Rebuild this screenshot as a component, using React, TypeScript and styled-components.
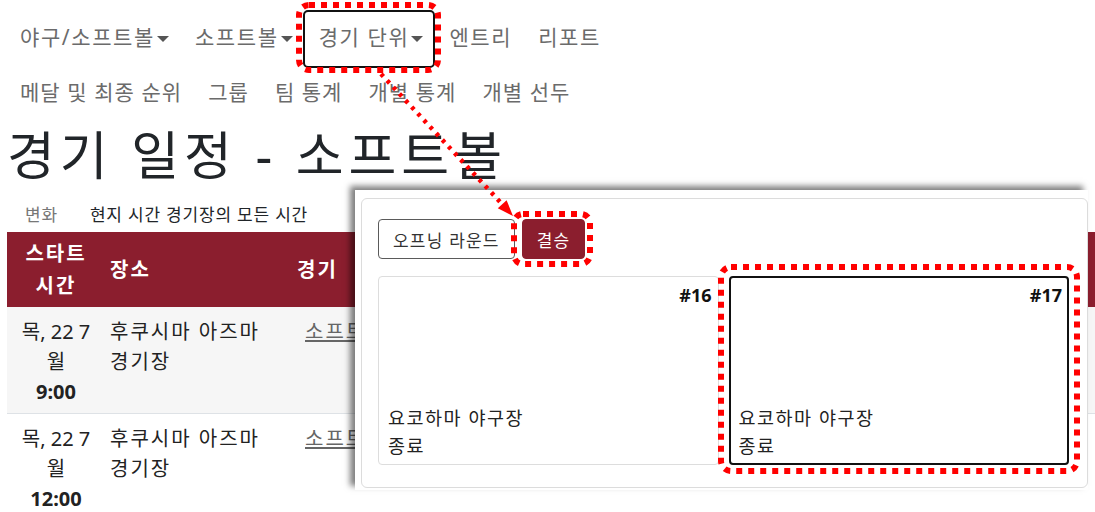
import React from "react";
import styled, { createGlobalStyle } from "styled-components";

const MAROON = "#8b1e2e";

const GlobalStyle = createGlobalStyle`
  html, body {
    margin: 0;
    padding: 0;
    background: #fff;
  }
  body {
    font-family: "Noto Sans", "Noto Sans CJK KR", sans-serif;
    color: #212529;
    overflow: hidden;
  }
`;

const navTop = ["야구/소프트볼", "소프트볼", "경기 단위", "엔트리", "리포트"];
const dropdowns = ["야구/소프트볼", "소프트볼", "경기 단위"];
const navBottom = ["메달 및 최종 순위", "그룹", "팀 통계", "개별 통계", "개별 선두"];

const games = [
  { day: "목, 22 7", month: "월", time: "9:00", venue: ["후쿠시마 아즈마", "경기장"], striped: true },
  { day: "목, 22 7", month: "월", time: "12:00", venue: ["후쿠시마 아즈마", "경기장"], striped: false }
];

const cards = [
  { num: "#16", venue: "요코하마 야구장", status: "종료", selected: false },
  { num: "#17", venue: "요코하마 야구장", status: "종료", selected: true }
];

export default function App() {
  return (
    <>
      <GlobalStyle />
      <Page>
        <NavRow>
          {navTop.map((item) => (
            <NavLink key={item}>
              {item}
              {dropdowns.includes(item) && <Caret />}
            </NavLink>
          ))}
        </NavRow>
        <NavRow>
          {navBottom.map((item) => (
            <NavLink key={item} $tight>
              {item}
            </NavLink>
          ))}
        </NavRow>

        <Title>경기 일정 - 소프트볼</Title>

        <SubLine>
          <Muted>변화</Muted>
          <span>현지 시간 경기장의 모든 시간</span>
        </SubLine>

        <Schedule>
          <colgroup>
            <col style={{ width: 98 }} />
            <col style={{ width: 187 }} />
            <col />
          </colgroup>
          <thead>
            <tr>
              <HeadCell $center>
                스타트
                <br />
                시간
              </HeadCell>
              <HeadCell>장소</HeadCell>
              <HeadCell>경기</HeadCell>
            </tr>
          </thead>
          <tbody>
            {games.map((g, i) => (
              <Row key={i} $striped={g.striped}>
                <TimeCell>
                  {g.day}
                  <br />
                  {g.month}
                  <br />
                  <strong>{g.time}</strong>
                </TimeCell>
                <Cell>
                  {g.venue[0]}
                  <br />
                  {g.venue[1]}
                </Cell>
                <GameCell>
                  <GameLink>소프트볼 - 오프닝 라운드</GameLink>
                </GameCell>
              </Row>
            ))}
          </tbody>
        </Schedule>

        <Popup>
          <Panel>
            <Buttons>
              <RoundButton>오프닝 라운드</RoundButton>
              <RoundButton $active>결승</RoundButton>
            </Buttons>
            <Cards>
              {cards.map((c) => (
                <Card key={c.num} $selected={c.selected}>
                  <GameNum>{c.num}</GameNum>
                  <CardFooter>
                    <div>{c.venue}</div>
                    <div>{c.status}</div>
                  </CardFooter>
                </Card>
              ))}
            </Cards>
          </Panel>
        </Popup>

        <Annotations width="1095" height="512" viewBox="0 0 1095 512">
          <rect x="304" y="11" width="130" height="56" rx="4" fill="none" stroke="#111" strokeWidth="2" />
          <Ring x="299" y="5" width="139" height="65" rx="10" />
          <Ring x="514" y="214" width="76" height="50" rx="9" />
          <Ring x="721" y="267" width="356" height="204" rx="10" />
          <line
            x1="381"
            y1="74"
            x2="502"
            y2="204"
            stroke="#f00"
            strokeWidth="4.5"
            strokeDasharray="3.5 5.5"
          />
          <polygon points="513,216 497.8,208.2 506.6,200.2" fill="#f00" />
        </Annotations>
      </Page>
    </>
  );
}

function Ring(props: { x: string; y: string; width: string; height: string; rx: string }) {
  return (
    <rect
      {...props}
      fill="none"
      stroke="#f00"
      strokeWidth="6"
      strokeDasharray="6 6"
    />
  );
}

const Page = styled("div")`
  position: relative;
  width: 1095px;
  height: 512px;
  overflow: hidden;
  box-sizing: border-box;
  padding: 10px 0 0 7px;
`;

const NavRow = styled("nav")`
  display: flex;
  align-items: center;
  height: 55px;
`;

const NavLink = styled("a")<{ $tight?: boolean }>`
  display: flex;
  align-items: center;
  padding: 0 13px;
  font-size: 21px;
  letter-spacing: ${(p) => (p.$tight ? "1.05px" : "1.6px")};
  line-height: 55px;
  color: #6b6b6b;
  white-space: nowrap;
`;

const Caret = styled("span")`
  display: inline-block;
  margin-left: 2px;
  margin-top: 2px;
  border-left: 6px solid transparent;
  border-right: 6px solid transparent;
  border-top: 6px solid #555;
`;

const Title = styled("h1")`
  margin: 4px 0 16px 0;
  font-size: 52px;
  line-height: 62px;
  letter-spacing: 5px;
  font-weight: 400;
  color: #212529;
  white-space: nowrap;
`;

const SubLine = styled("div")`
  display: flex;
  gap: 32px;
  padding-left: 18px;
  font-size: 17px;
  letter-spacing: 0.8px;
  line-height: 25px;
  margin-bottom: 5px;
`;

const Muted = styled("span")`
  color: #777;
`;

const Schedule = styled("table")`
  width: 1088px;
  border-collapse: collapse;
  table-layout: fixed;
`;

const HeadCell = styled("th")<{ $center?: boolean }>`
  background: ${MAROON};
  color: #fff;
  font-size: 20px;
  font-weight: 700;
  letter-spacing: 2px;
  line-height: 32px;
  height: 75px;
  box-sizing: border-box;
  padding: 0 5px;
  text-align: ${(p) => (p.$center ? "center" : "left")};
  vertical-align: middle;
`;

const Row = styled("tr")<{ $striped: boolean }>`
  background: ${(p) => (p.$striped ? "#f6f6f6" : "#fff")};
  border-bottom: 1px solid #dee2e6;
`;

const Cell = styled("td")`
  font-size: 20px;
  letter-spacing: 2px;
  line-height: 30px;
  padding: 10px 5px 6px;
  vertical-align: top;
  color: #222;
  white-space: nowrap;
`;

const TimeCell = styled(Cell)`
  text-align: center;
  letter-spacing: 0;
  padding-left: 0;
  padding-right: 0;
`;

const GameCell = styled(Cell)`
  padding-left: 13px;
`;

const GameLink = styled("a")`
  color: #666;
  text-decoration: underline;
`;

const Popup = styled("div")`
  position: absolute;
  left: 355px;
  top: 190px;
  width: 733px;
  height: 300px;
  box-sizing: border-box;
  padding: 8px 0 2px 6px;
  background: #fff;
  box-shadow: -5px -4px 6px rgba(0, 0, 0, 0.5);
`;

const Panel = styled("div")`
  height: 100%;
  box-sizing: border-box;
  border: 1px solid #dcdcdc;
  border-radius: 6px;
  padding: 20px 18px 22px 16px;
  display: flex;
  flex-direction: column;
  gap: 17px;
`;

const Buttons = styled("div")`
  display: flex;
  gap: 7px;
`;

const RoundButton = styled("button")<{ $active?: boolean }>`
  height: 40px;
  padding: 0 14px;
  border-radius: 4px;
  font-family: inherit;
  font-size: 17px;
  letter-spacing: 1.2px;
  border: 1px solid ${(p) => (p.$active ? MAROON : "#5a5a5a")};
  background: ${(p) => (p.$active ? MAROON : "#fff")};
  color: ${(p) => (p.$active ? "#fff" : "#333")};
`;

const Cards = styled("div")`
  flex: 1;
  display: grid;
  grid-template-columns: 1fr 1fr;
  gap: 10px;
`;

const Card = styled("div")<{ $selected: boolean }>`
  display: flex;
  flex-direction: column;
  justify-content: space-between;
  box-sizing: border-box;
  border: ${(p) => (p.$selected ? "2px solid #111" : "1px solid #ddd")};
  border-radius: 4px;
  padding: ${(p) => (p.$selected ? "5px 5px 3px 8px" : "6px 6px 4px 9px")};
`;

const GameNum = styled("div")`
  align-self: flex-end;
  font-size: 18px;
  font-weight: 700;
  color: #111;
`;

const CardFooter = styled("div")`
  font-size: 18.5px;
  letter-spacing: 1.5px;
  line-height: 28px;
  color: #222;
`;

const Annotations = styled("svg")`
  position: absolute;
  left: 0;
  top: 0;
  pointer-events: none;
`;
